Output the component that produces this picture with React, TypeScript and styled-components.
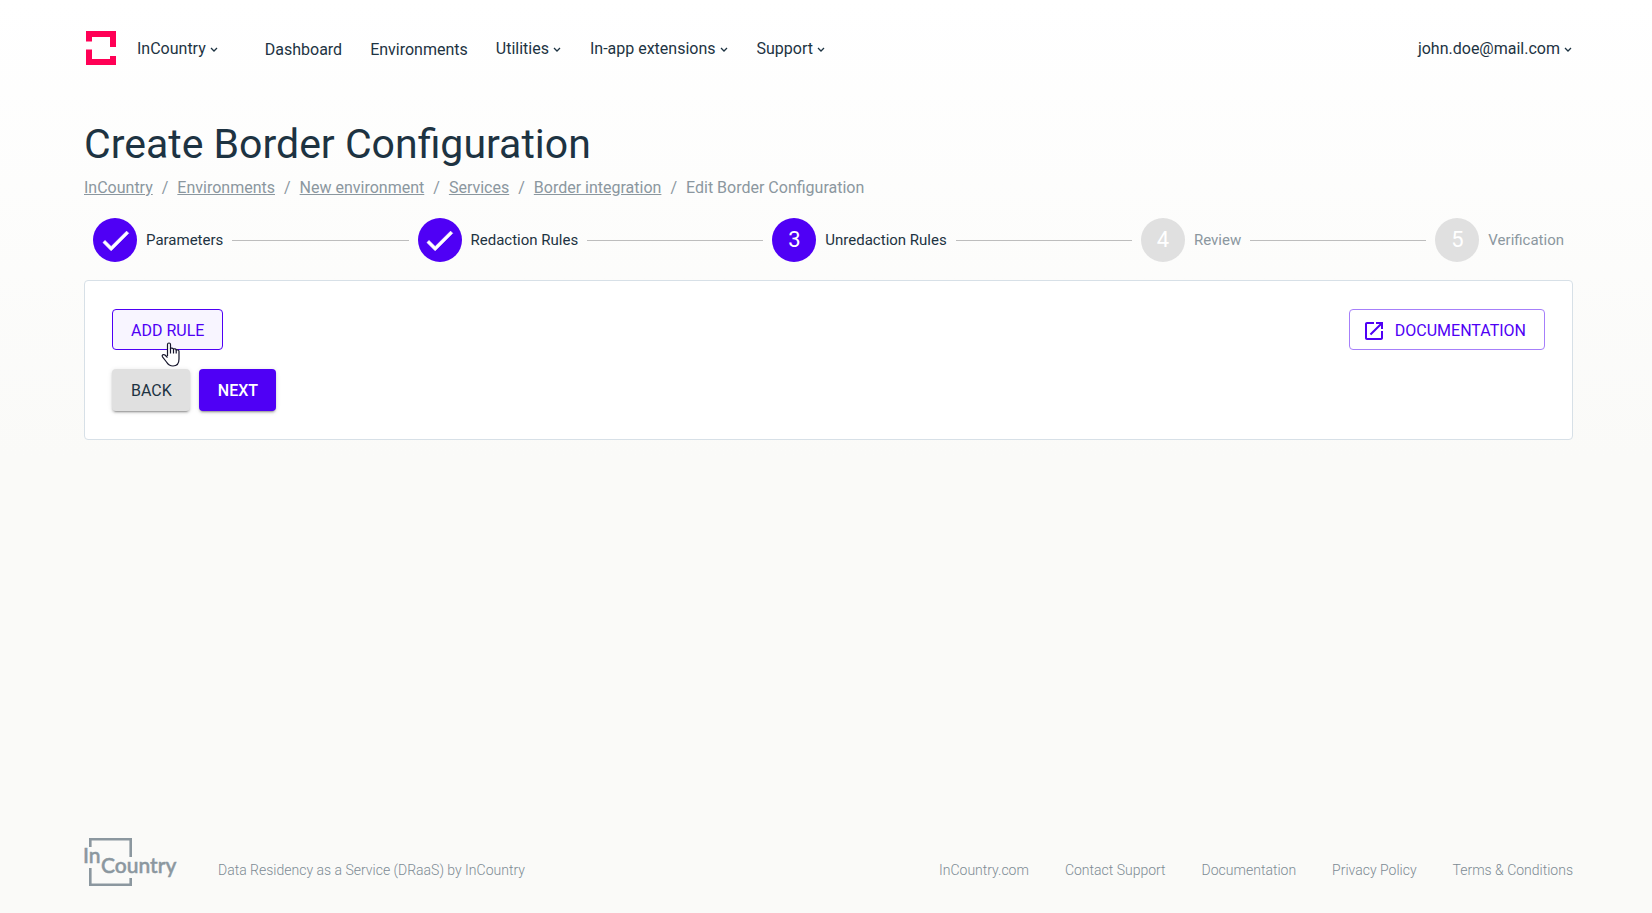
import React from "react";
import styled, { createGlobalStyle } from "styled-components";

const GlobalStyle = createGlobalStyle`
  *, *::before, *::after { box-sizing: border-box; }
  body {
    margin: 0;
    font-family: Roboto, "Liberation Sans", sans-serif;
    font-size: 16px;
    line-height: 24px;
    color: #1d3342;
    background: #fafaf8;
  }
  ul, ol { margin: 0; padding: 0; list-style: none; }
  button { font: inherit; color: inherit; cursor: pointer; }
  a { color: inherit; }
`;

const Page = styled.div`
  min-height: 100vh;
  display: flex;
  flex-direction: column;
  padding: 0 79px 0 84px;
  background: linear-gradient(180deg, #ffffff 0, #fafaf8 50%);
`;

const Header = styled.header`
  display: flex;
  align-items: center;
  height: 96px;
`;

const BrandLink = styled.a`
  display: flex;
  margin: 0 21px 0 2px;
`;

const MenuButton = styled.button`
  display: flex;
  align-items: center;
  gap: 4px;
  padding: 2px 1px 0 0;
  border: 0;
  background: none;
`;

const NavList = styled.ul`
  display: flex;
  align-items: center;
  gap: 28px;
  flex: 1;
  margin-left: 46px;
`;

const NavLink = styled.a`
  display: block;
  padding-top: 4px;
  text-decoration: none;
`;

const Title = styled.h1`
  margin: 20px 0 0;
  font-size: 41px;
  line-height: 56px;
  font-weight: 400;
`;

const Crumbs = styled.ol`
  display: flex;
  margin-top: 4px;
  color: #8b979f;

  li + li::before {
    content: "/";
    margin: 0 9px;
  }
`;

const Steps = styled.ol`
  display: flex;
  align-items: center;
  gap: 9px;
  margin-top: 18px;
  padding: 0 9px;
`;

const Step = styled.li<{ $active: boolean }>`
  display: flex;
  align-items: center;
  gap: 9px;
  font-size: 15px;
  color: ${(p) => (p.$active ? "#1d3342" : "#8b979f")};
`;

const StepBadge = styled.span<{ $active: boolean }>`
  display: flex;
  align-items: center;
  justify-content: center;
  width: 44px;
  height: 44px;
  border-radius: 50%;
  font-size: 22px;
  color: #fff;
  background: ${(p) => (p.$active ? "#4f00f5" : "#e0e0e0")};
`;

const Connector = styled.li`
  flex: 1;
  height: 1px;
  background: #bdbdbd;
`;

const Card = styled.main`
  margin-top: 18px;
  padding: 28px 27px;
  border: 1px solid #d7e0e7;
  border-radius: 4px;
  background: #fff;
`;

const Toolbar = styled.div`
  display: flex;
  justify-content: space-between;
`;

const Actions = styled.div`
  display: flex;
  gap: 9px;
  margin-top: 19px;
`;

const Button = styled.button`
  position: relative;
  display: flex;
  align-items: center;
  height: 42px;
  padding: 2px 18px 0 19px;
  border: 0;
  border-radius: 4px;
  text-transform: uppercase;
`;

const OutlineButton = styled(Button)<{ $hovered?: boolean; $icon?: boolean }>`
  gap: 11px;
  height: 41px;
  padding: ${(p) => (p.$icon ? "2px 18px 0 14px" : "2px 18px 0")};
  border: 1px solid ${(p) => (p.$hovered ? "#4f00f5" : "#a67ffa")};
  color: #4f00f5;
  background: ${(p) => (p.$hovered ? "#f8f5ff" : "#fff")};
`;

const SolidButton = styled(Button)<{ $primary?: boolean }>`
  font-weight: ${(p) => (p.$primary ? 500 : 400)};
  color: ${(p) => (p.$primary ? "#fff" : "#1d3342")};
  background: ${(p) => (p.$primary ? "#4f00f5" : "#e0e0e0")};
  box-shadow: 0 3px 1px -2px rgba(0, 0, 0, 0.2), 0 2px 2px rgba(0, 0, 0, 0.14),
    0 1px 5px rgba(0, 0, 0, 0.12);
`;

const Pointer = styled.svg`
  position: absolute;
  left: 48px;
  top: 32px;
  z-index: 1;
`;

const Footer = styled.footer`
  display: flex;
  align-items: flex-end;
  margin-top: auto;
  padding-bottom: 27px;
  font-size: 14px;
  font-weight: 300;
  color: #7d8b94;
`;

const Tagline = styled.p`
  flex: 1;
  margin: 0 0 0 40px;
  padding-bottom: 4px;
`;

const FooterLinks = styled.ul`
  display: flex;
  gap: 36px;
  padding-bottom: 4px;
`;

const FooterLink = styled.a`
  display: block;
  text-decoration: none;
`;

const Chevron = () => (
  <svg width="8" height="8" viewBox="0 0 8 8" aria-hidden="true">
    <path d="M1 3l3 3 3-3" fill="none" stroke="#1d3342" strokeWidth="1.3" />
  </svg>
);

const BrandMark = () => (
  <svg width="30" height="34" viewBox="0 0 30 34" fill="#ff0055" aria-hidden="true">
    <path d="M0 0H30V16H24V6H6V10.500H0Z" />
    <path d="M0 18.500H6V28H24V25H30V34H0Z" />
  </svg>
);

const FooterLogo = () => (
  <svg width="94" height="48" viewBox="0 0 94 48" role="img" aria-label="InCountry">
    <g fill="none" stroke="#8b979f" strokeWidth="2.600">
      <path d="M6.300 9V1.300H46.700V19" />
      <path d="M6.300 30V46.700H46.700V40" />
    </g>
    <g
      fill="#8b979f"
      stroke="#8b979f"
      strokeWidth="0.500"
      fontFamily="Lato, sans-serif"
      fontWeight="500"
      fontSize="21"
    >
      <text x="-1" y="25">In</text>
      <text x="17" y="35">Country</text>
    </g>
  </svg>
);

const Check = () => (
  <svg width="35" height="35" viewBox="0 0 24 24" fill="#fff" stroke="#fff" strokeWidth="0.500" aria-hidden="true">
    <path d="M9 16.170L4.830 12l-1.420 1.410L9 19 21 7l-1.410-1.410z" />
  </svg>
);

const OpenIcon = () => (
  <svg width="20" height="20" viewBox="2 2 20 20" fill="#4f00f5" aria-hidden="true">
    <path d="M19 19H5V5h7V3H5c-1.110 0-2 .9-2 2v14c0 1.100.89 2 2 2h14c1.100 0 2-.9 2-2v-7h-2v7zM14 3v2h3.590l-9.830 9.830 1.410 1.410L19 6.410V10h2V3h-7z" />
  </svg>
);

const HandPointer = () => (
  <Pointer width="20" height="25" viewBox="0 0 20 25" aria-hidden="true">
    <path
      d="M6.500 14V2.500a1.500 1.500 0 0 1 3 0V6.500C10 5.800 12 6 12.500 7C13.200 6.500 15 6.700 15.200 8C16.500 7.500 18 8 18 9.500V17C18 21.500 15.500 24 12 24C8.500 24 7 22.500 5.500 20L1.500 14.800C0.500 13 2.500 12 4 13L6.500 15.500"
      fill="#fff"
      stroke="#14142b"
      strokeWidth="1.200"
      strokeLinejoin="round"
    />
    <path d="M9.500 6v5.500M12.500 7v4.500M15.200 8v3.500" stroke="#14142b" strokeWidth="1.200" />
  </Pointer>
);

const navItems = [
  { label: "Dashboard" },
  { label: "Environments" },
  { label: "Utilities", menu: true },
  { label: "In-app extensions", menu: true },
  { label: "Support", menu: true },
];

const crumbs = ["InCountry", "Environments", "New environment", "Services", "Border integration"];

const steps = ["Parameters", "Redaction Rules", "Unredaction Rules", "Review", "Verification"];
const currentStep = 2;

const footerLinks = [
  "InCountry.com",
  "Contact Support",
  "Documentation",
  "Privacy Policy",
  "Terms & Conditions",
];

export default function App() {
  return (
    <Page>
      <GlobalStyle />
      <Header>
        <BrandLink href="#home" aria-label="Home">
          <BrandMark />
        </BrandLink>
        <MenuButton type="button">
          InCountry
          <Chevron />
        </MenuButton>
        <NavList>
          {navItems.map((item) => (
            <li key={item.label}>
              {item.menu ? (
                <MenuButton type="button">
                  {item.label}
                  <Chevron />
                </MenuButton>
              ) : (
                <NavLink href="#nav">{item.label}</NavLink>
              )}
            </li>
          ))}
        </NavList>
        <MenuButton type="button">
          john.doe@mail.com
          <Chevron />
        </MenuButton>
      </Header>

      <Title>Create Border Configuration</Title>
      <nav aria-label="Breadcrumb">
        <Crumbs>
          {crumbs.map((crumb) => (
            <li key={crumb}>
              <a href="#crumb">{crumb}</a>
            </li>
          ))}
          <li aria-current="page">Edit Border Configuration</li>
        </Crumbs>
      </nav>

      <Steps>
        {steps.map((label, i) => (
          <React.Fragment key={label}>
            {i > 0 && <Connector aria-hidden="true" />}
            <Step $active={i <= currentStep}>
              <StepBadge $active={i <= currentStep}>
                {i < currentStep ? <Check /> : i + 1}
              </StepBadge>
              {label}
            </Step>
          </React.Fragment>
        ))}
      </Steps>

      <Card>
        <Toolbar>
          <OutlineButton type="button" $hovered>
            Add rule
            <HandPointer />
          </OutlineButton>
          <OutlineButton type="button" $icon>
            <OpenIcon />
            Documentation
          </OutlineButton>
        </Toolbar>
        <Actions>
          <SolidButton type="button">Back</SolidButton>
          <SolidButton type="button" $primary>
            Next
          </SolidButton>
        </Actions>
      </Card>

      <Footer>
        <FooterLogo />
        <Tagline>Data Residency as a Service (DRaaS) by InCountry</Tagline>
        <FooterLinks>
          {footerLinks.map((label) => (
            <li key={label}>
              <FooterLink href="#footer">{label}</FooterLink>
            </li>
          ))}
        </FooterLinks>
      </Footer>
    </Page>
  );
}
